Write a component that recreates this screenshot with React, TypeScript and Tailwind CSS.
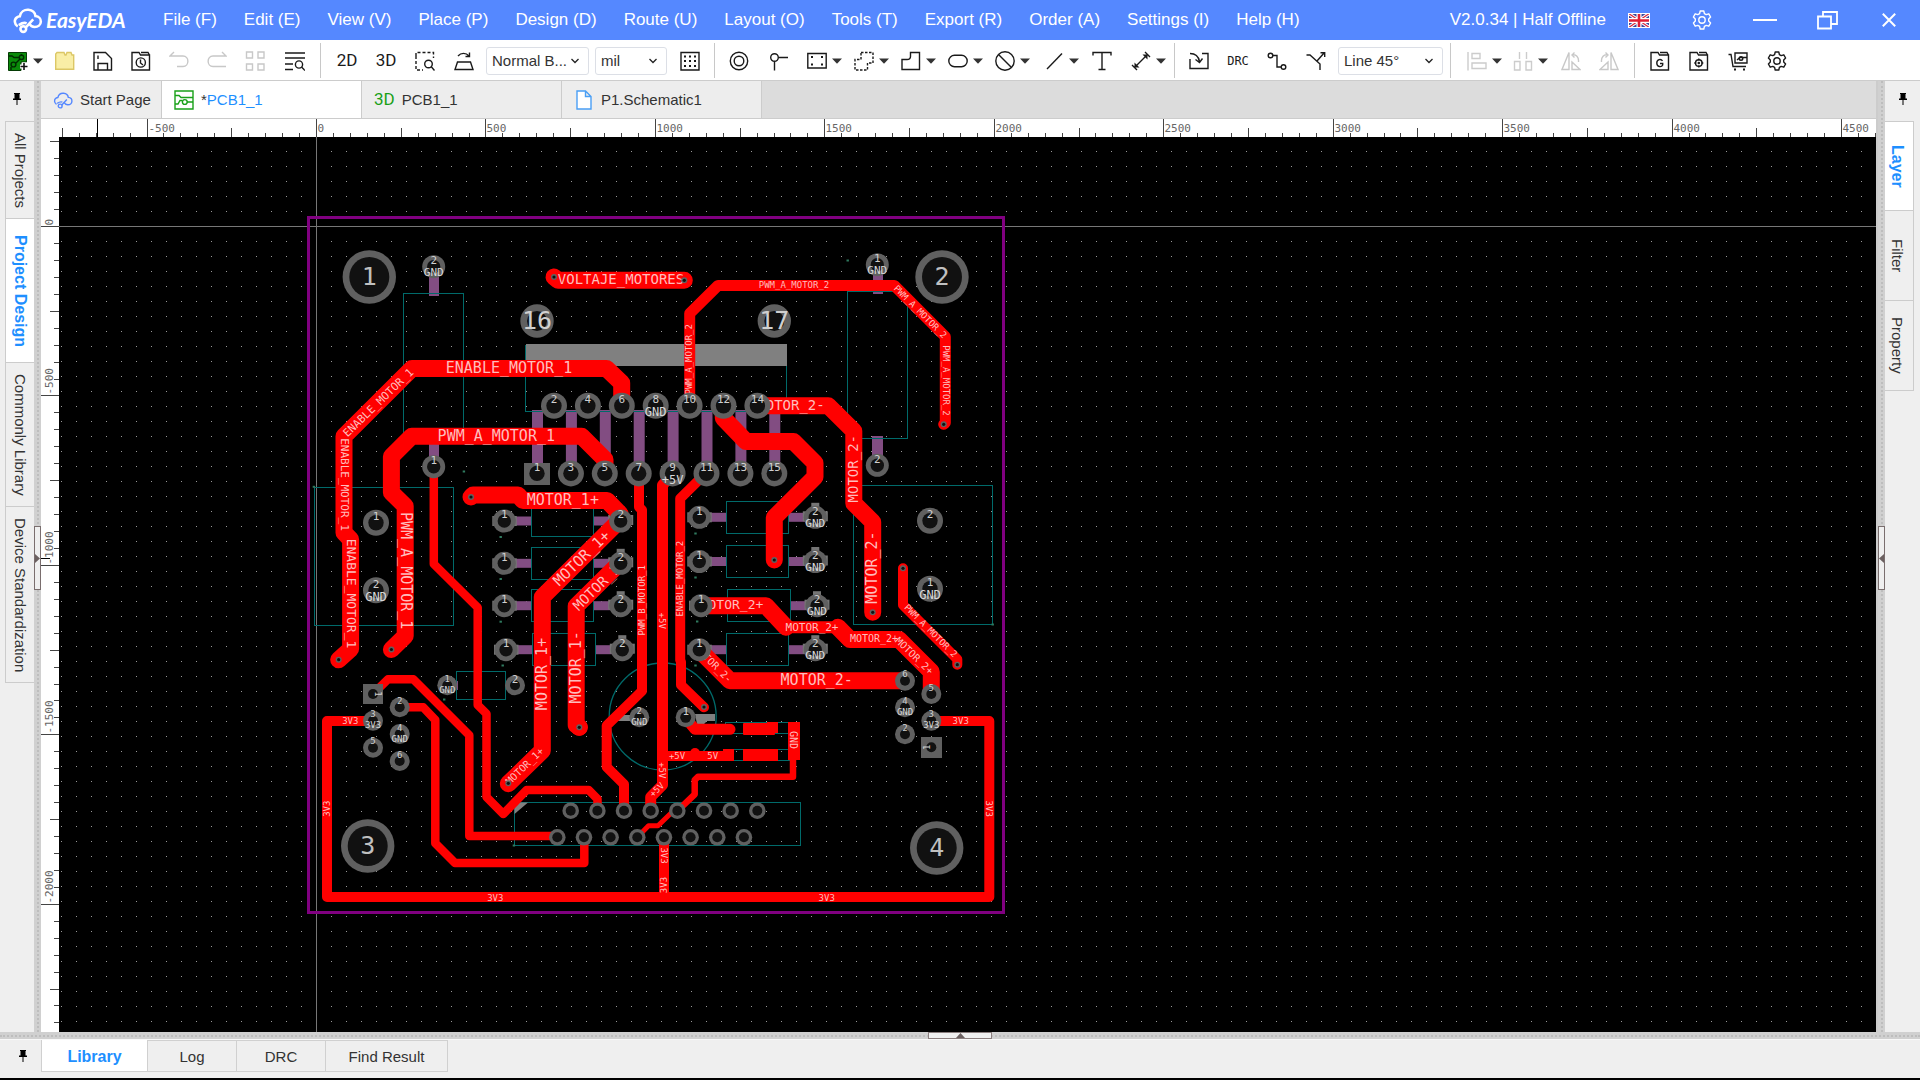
import { useEffect, useState, type ReactNode } from "react";

const menus = [
  "File (F)",
  "Edit (E)",
  "View (V)",
  "Place (P)",
  "Design (D)",
  "Route (U)",
  "Layout (O)",
  "Tools (T)",
  "Export (R)",
  "Order (A)",
  "Settings (I)",
  "Help (H)",
];

/* ---------- small shared pieces ---------- */

function Icon({ children, className = "" }: { children: ReactNode; className?: string }) {
  return (
    <svg
      viewBox="0 0 20 20"
      className={`h-5 w-5 shrink-0 ${className}`}
      fill="none"
      stroke="currentColor"
      strokeWidth={1.4}
      aria-hidden="true"
    >
      {children}
    </svg>
  );
}

function Tool({ label, children, className = "" }: { label: string; children: ReactNode; className?: string }) {
  return (
    <button
      type="button"
      aria-label={label}
      className={`flex h-5 w-5 shrink-0 items-center justify-center text-[#1a1a1a] ${className}`}
    >
      {children}
    </button>
  );
}

function DropTool({ label, children, className = "" }: { label: string; children: ReactNode; className?: string }) {
  return (
    <button
      type="button"
      aria-label={label}
      className={`flex shrink-0 items-center gap-[5px] text-[#1a1a1a] ${className}`}
    >
      {children}
      <svg viewBox="0 0 10 6" className="h-[6px] w-[10px]" fill="#333" aria-hidden="true">
        <path d="M0 0.5H10L5 5.8Z" />
      </svg>
    </button>
  );
}

function Separator({ className = "" }: { className?: string }) {
  return <div className={`h-[35px] w-px shrink-0 bg-[#c8c8c8] ${className}`} />;
}

function Picker({ label, value, className = "" }: { label: string; value: string; className?: string }) {
  return (
    <div className={`relative h-7 shrink-0 ${className}`}>
      <select
        aria-label={label}
        className="h-7 w-full appearance-none rounded-[3px] border border-[#dcdfe6] bg-white pl-[5px] text-[15px] leading-6 text-[#333]"
      >
        <option>{value}</option>
      </select>
      <svg
        viewBox="0 0 8 6"
        className="pointer-events-none absolute top-[11px] right-[10px] h-[6px] w-[8px]"
        fill="none"
        stroke="#222"
        strokeWidth={1.3}
        aria-hidden="true"
      >
        <path d="M0.5 1L4 4.5L7.5 1" />
      </svg>
    </div>
  );
}

function Pin() {
  return (
    <svg viewBox="0 0 8 12" className="h-3 w-2" aria-hidden="true">
      <path d="M1 0H7V1H6.5V5.5H8V7H4.5V12H3.5V7H0V5.5H1.5V1H1Z" fill="#000" />
    </svg>
  );
}

function Cloud() {
  return (
    <>
      <path d="M3.5 14.3C1.2 12.8 0.8 9.6 3 8.2C3.6 7.8 4.2 7.6 4.9 7.5C5.5 4.6 7.9 3 10.6 3.2C13.2 3.4 15 5.2 15.3 7.4C17.7 7.6 19 9.3 18.9 11.2C18.8 13.3 17 14.7 14.8 14.7C12.8 14.7 11.7 13.5 11 12.3" />
      <path d="M8.6 15.2L13.8 9.6" />
      <circle cx="7.2" cy="16" r="1.9" />
      <path d="M4.2 13.4C5.8 12.3 7.5 11.3 9.4 12.2" />
    </>
  );
}

function Gear() {
  return (
    <>
      <path
        d="M8.2 1H11.8L12.4 3.6L14.2 4.6L16.8 3.8L18.6 7L16.7 8.9V11.1L18.6 13L16.8 16.2L14.2 15.4L12.4 16.4L11.8 19H8.2L7.6 16.4L5.8 15.4L3.2 16.2L1.4 13L3.3 11.1V8.9L1.4 7L3.2 3.8L5.8 4.6L7.6 3.6Z"
        strokeLinejoin="round"
      />
      <circle cx="10" cy="10" r="3.2" />
    </>
  );
}

/* ---------- title bar ---------- */

function TitleBar() {
  return (
    <header className="flex h-10 shrink-0 items-center bg-[#5588ff] text-[17px] text-white">
      <div className="flex w-[163px] shrink-0 items-center pl-3">
        <svg viewBox="0 0 20 20" className="h-[30px] w-[31px]" fill="none" stroke="#fff" strokeWidth={1.7} aria-hidden="true">
          <Cloud />
        </svg>
        <span className="pl-[3px] font-['Lato','Open_Sans',sans-serif] text-[21px] leading-6 font-bold italic">
          EasyEDA
        </span>
      </div>
      <nav className="flex gap-[27px] pb-px whitespace-nowrap">
        {menus.map((menu) => (
          <button key={menu} type="button">
            {menu}
          </button>
        ))}
      </nav>
      <div className="ml-auto flex shrink-0 items-center pr-6 whitespace-nowrap">
        <span>V2.0.34 | Half Offline</span>
        <button type="button" aria-label="Language" className="ml-[22px]">
          <svg viewBox="0 0 22 15" className="h-[15px] w-[22px]" aria-hidden="true">
            <rect width="22" height="15" fill="#3b4a9c" />
            <path d="M0 0L22 15M22 0L0 15" stroke="#fff" strokeWidth="3.2" />
            <path d="M0 0L22 15M22 0L0 15" stroke="#d8283c" strokeWidth="1.2" />
            <path d="M11 0V15M0 7.5H22" stroke="#fff" strokeWidth="5" />
            <path d="M11 0V15M0 7.5H22" stroke="#e01f35" strokeWidth="2.6" />
            <rect x="0.5" y="0.5" width="21" height="14" fill="none" stroke="#fff" />
          </svg>
        </button>
        <button type="button" aria-label="Preferences" className="ml-[42px]">
          <Icon>
            <Gear />
          </Icon>
        </button>
        <button type="button" aria-label="Minimize" className="ml-[41px]">
          <svg viewBox="0 0 24 20" className="h-5 w-6" stroke="#fff" strokeWidth={2} aria-hidden="true">
            <path d="M0 10H24" />
          </svg>
        </button>
        <button type="button" aria-label="Restore" className="ml-10">
          <svg viewBox="0 0 21 20" className="h-5 w-[21px]" fill="none" stroke="#fff" strokeWidth={1.8} aria-hidden="true">
            <path d="M1 6.5H14V18.5H1Z M6 6V2H20V14H14.5" />
          </svg>
        </button>
        <button type="button" aria-label="Close" className="ml-11">
          <svg viewBox="0 0 14 14" className="h-[14px] w-[14px]" stroke="#fff" strokeWidth={2} aria-hidden="true">
            <path d="M0.8 0.8L13.2 13.2M13.2 0.8L0.8 13.2" />
          </svg>
        </button>
      </div>
    </header>
  );
}

/* ---------- tool bar ---------- */

function ToolBar() {
  return (
    <div className="flex h-[41px] shrink-0 items-center border-b border-[#ccc] bg-white pt-px pl-2">
      <DropTool label="New">
        <svg viewBox="0 0 20 20" className="h-5 w-5" fill="none" aria-hidden="true">
          <path d="M0.5 1.5H18.5V11H13V19.5H0.5Z" fill="#0a8a0a" stroke="#053b05" />
          <path d="M1 5H4L6 6.5H11M13.5 3V5M3 19V16M8 12L12 8" stroke="#012b01" strokeWidth="1.4" />
          <circle cx="13.5" cy="6.3" r="2.2" stroke="#012b01" strokeWidth="1.4" />
          <circle cx="5.5" cy="13.5" r="2.4" stroke="#012b01" strokeWidth="1.4" />
          <path d="M16 11.5V19.5M12 15.5H20" stroke="#fff" strokeWidth="4" />
          <path d="M16 12V19M12.5 15.5H19.5" stroke="#111" strokeWidth="1.6" />
        </svg>
      </DropTool>
      <div className="ml-[12px] flex gap-[18px]">
        <Tool label="Open">
          <Icon>
            <path d="M0.7 3V18.3H18.7V4H17L16 1.5H12L11 4H10L9 1.5H2Z" fill="#f9eea6" stroke="#dcc766" />
          </Icon>
        </Tool>
        <Tool label="Save">
          <Icon>
            <path d="M1 1.5H12.5L18.5 7.5V19H1Z M5 19V12.5H14.5V19M5 4.5V8" />
          </Icon>
        </Tool>
        <Tool label="History">
          <Icon>
            <path d="M1 19V1.5H8L9.5 4H18.5V19Z M10 1.5H17L18.5 4" />
            <circle cx="9.8" cy="11.5" r="4.6" />
            <path d="M9.5 8.5V12L12 14" />
          </Icon>
        </Tool>
        <Tool label="Undo" className="text-[#c8c8c8]!">
          <Icon>
            <path d="M5 1L1 5H14C20.5 5 20.5 15.5 14 15.5H8" />
          </Icon>
        </Tool>
        <Tool label="Redo" className="text-[#c8c8c8]!">
          <Icon>
            <path d="M15 1L19 5H6C-0.5 5 -0.5 15.5 6 15.5H19" />
          </Icon>
        </Tool>
        <Tool label="Arrange" className="text-[#c8c8c8]!">
          <Icon>
            <path d="M1.5 1H7.5V7H1.5ZM13 1H19V7H13ZM1.5 13H7.5V19H1.5ZM13 13H19V19H13Z" />
          </Icon>
        </Tool>
        <Tool label="Find" className="ml-[2px]">
          <Icon>
            <path d="M0 2H20M0 7H20M0 13H8M0 18.5H8" strokeWidth="1.7" />
            <circle cx="14" cy="13.5" r="3.6" />
            <path d="M16.5 16L20 19.5" />
          </Icon>
        </Tool>
      </div>
      <Separator className="ml-[15px]" />
      <div className="ml-4 flex gap-[19px]">
        <Tool label="2D view">
          <span className="font-['Roboto',sans-serif] text-[17px]">2D</span>
        </Tool>
        <Tool label="3D view">
          <span className="font-['Roboto',sans-serif] text-[17px]">3D</span>
        </Tool>
        <Tool label="Zoom area">
          <Icon>
            <path d="M1 5V1.5H18.5V7M1 5V19H8" strokeDasharray="3 2" />
            <circle cx="13.5" cy="13" r="3.8" />
            <path d="M16.3 15.8L19.5 19.5" />
          </Icon>
        </Tool>
        <Tool label="Flip board">
          <Icon>
            <path d="M3.5 11H16.5L19 18.5H1ZM4 5C7 1.5 12 1.5 15 5M15.5 1.5V5.5H11.5" />
          </Icon>
        </Tool>
      </div>
      <Picker label="View mode" value="Normal B..." className="ml-3 w-[103px]" />
      <Picker label="Unit" value="mil" className="ml-[6px] w-[72px]" />
      <Tool label="Grid" className="ml-[13px]">
        <Icon>
          <path d="M1 1.5H19V19H1Z" />
          <path
            d="M4 5.5H6M9 5.5H11M14 5.5H16M4 10H6M9 10H11M14 10H16M4 15H6M9 15H11M14 15H16"
            strokeWidth="2"
          />
        </Icon>
      </Tool>
      <Separator className="ml-[14px]" />
      <Tool label="Pad" className="ml-[14px]">
        <Icon>
          <circle cx="10" cy="10" r="8.7" />
          <circle cx="10" cy="10" r="4.8" />
        </Icon>
      </Tool>
      <Tool label="Via" className="ml-5">
        <Icon>
          <circle cx="5.5" cy="6.5" r="3.8" />
          <path d="M9.5 6.5H19M5.5 10.5V19.5" />
        </Icon>
      </Tool>
      <div className="ml-[18px] flex gap-3">
        <DropTool label="Copper area">
          <Icon>
            <path d="M0.8 2.5H19.2V17H0.8Z" />
            <path d="M4 6H6M14 6H16M4 13.5H6M14 13.5H16" strokeWidth="2" />
          </Icon>
        </DropTool>
        <DropTool label="Keepout region">
          <Icon>
            <path d="M7 1.5H19V12H13.5V19H1V8.5H7Z" strokeDasharray="2.5 1.5" />
          </Icon>
        </DropTool>
        <DropTool label="Fill region">
          <Icon>
            <path d="M9.5 1.5H18.5V18.5H1V8.5H6C8 8.5 9.5 7.5 9.5 5.5Z" />
          </Icon>
        </DropTool>
        <DropTool label="Board outline">
          <Icon>
            <rect x="0.8" y="4.3" width="18.4" height="11.4" rx="5.7" />
          </Icon>
        </DropTool>
        <DropTool label="Slot">
          <Icon>
            <circle cx="10" cy="10" r="9.2" />
            <path d="M3.5 3.5L16.5 16.5" />
          </Icon>
        </DropTool>
        <DropTool label="Line" className="ml-[2px]">
          <Icon>
            <path d="M3 18L18 2.5" />
          </Icon>
        </DropTool>
      </div>
      <Tool label="Text" className="ml-[13px]">
        <Icon>
          <path d="M1 4.5V1.5H19V4.5M10 1.5V18.5M6.5 18.5H13.5" />
        </Icon>
      </Tool>
      <DropTool label="Dimension" className="ml-[19px]">
        <Icon>
          <path d="M3.5 16.5L16.5 3.5M1 14L6 19M14 1L19 6" />
          <path d="M3.5 16.5V11.5L8.5 16.5ZM16.5 3.5H11.5L16.5 8.5Z" fill="currentColor" stroke="none" />
        </Icon>
      </DropTool>
      <Separator className="ml-[8px]" />
      <div className="ml-[14px] flex gap-[19px]">
        <Tool label="Import changes">
          <Icon>
            <path d="M1 8V17.5H19V2.5H13M1 2.5C6 2.5 9.5 5 10.5 10.5M6.5 8.5L10.5 11.5L13.5 7.5" />
          </Icon>
        </Tool>
        <Tool label="Check design rules">
          <span className="font-['DejaVu_Sans_Mono',monospace] text-[12px]">DRC</span>
        </Tool>
        <Tool label="Route track">
          <Icon>
            <circle cx="3.5" cy="4.5" r="2.3" />
            <circle cx="16.5" cy="16" r="2.3" />
            <path d="M6 4.5H10V16H14" />
          </Icon>
        </Tool>
        <Tool label="Route options">
          <Icon>
            <path d="M0.5 4H4L14 13V19M11 10L18.5 1.5M14.5 1.8H18.7V6" />
          </Icon>
        </Tool>
      </div>
      <Picker label="Routing angle" value="Line 45°" className="ml-3 w-[105px]" />
      <Separator className="ml-[7px]" />
      <DropTool label="Align" className="ml-4">
        <Icon className="text-[#ccc]">
          <path d="M1 1V19.5M5 2.5H13V7.5H5ZM5 12H19V17.5H5Z" />
        </Icon>
      </DropTool>
      <DropTool label="Distribute" className="ml-[11px]">
        <Icon className="text-[#ccc]">
          <path d="M6.5 1V8M13.5 1V8M1.5 10.5H7V19H1.5ZM13 10.5H18.5V19H13Z" />
        </Icon>
      </DropTool>
      <Tool label="Rotate left" className="ml-[13px] text-[#c8c8c8]!">
        <Icon>
          <path d="M8 1.5V18.5H1Z M11 11L19 18.5H11ZM11 4C15 3 18 6 17.5 11M13.5 1.5L11 4L13.5 6.5" />
        </Icon>
      </Tool>
      <Tool label="Rotate right" className="ml-[18px] text-[#c8c8c8]!">
        <Icon>
          <path d="M12 1.5V18.5H19Z M9 11L1 18.5H9ZM9 4C5 3 2 6 2.5 11M6.5 1.5L9 4L6.5 6.5" />
        </Icon>
      </Tool>
      <Separator className="ml-[15px]" />
      <div className="ml-[15px] flex gap-[19px]">
        <Tool label="Gerber file">
          <Icon>
            <path d="M1 19V1.5H8L9.5 4H18.5V19Z M10 1.5H17L18.5 4" />
            <path d="M12.5 10C11 7.5 6.8 8.2 6.8 12C6.8 16.2 11.5 16.5 12.7 14V12.5H10" />
          </Icon>
        </Tool>
        <Tool label="Pick and place file">
          <Icon>
            <path d="M1 19V1.5H8L9.5 4H18.5V19Z M10 1.5H17L18.5 4" />
            <circle cx="9.8" cy="12" r="3.3" />
            <path d="M9.8 7.5V9.5M9.8 14.5V16.5M5.3 12H7.3M12.3 12H14.3" />
            <circle cx="9.8" cy="12" r="0.6" />
          </Icon>
        </Tool>
        <Tool label="Order parts">
          <Icon>
            <path d="M0.5 3.5H3L5 15.5H18M7 2H19V12H7Z M9 9L12 6.5H19" />
            <circle cx="13" cy="7.5" r="1.8" />
            <path d="M6 18.5H8M15 18.5H17" strokeWidth="2" />
          </Icon>
        </Tool>
        <Tool label="Settings">
          <Icon>
            <Gear />
          </Icon>
        </Tool>
      </div>
    </div>
  );
}

/* ---------- document tabs ---------- */

function DocTabs() {
  const tab = "flex items-center gap-[7px] border-r border-[#ccc] pt-px pl-3 whitespace-nowrap";
  return (
    <div className="flex h-[38px] shrink-0 border-b border-[#ccc] bg-[#dcdcdc] text-[15px] text-[#333]">
      <button type="button" className={`${tab} w-[121px] bg-[#ededed]`}>
        <Icon className="text-[#5588ff]">
          <Cloud />
        </Icon>
        Start Page
      </button>
      <button type="button" className={`${tab} w-[200px] bg-white`}>
        <Icon className="text-[#18a018]">
          <path d="M1 1H19V19H1ZM1 5.5H5L7 7.5H19M1 14H4L6 10.5H8M13 12H19" />
          <circle cx="10.8" cy="12" r="2.4" />
        </Icon>
        <span>
          *<span className="text-[#1e8fff]">PCB1_1</span>
        </span>
      </button>
      <button type="button" className={`${tab} w-[200px] bg-[#ededed]`}>
        <span className="font-['Roboto',sans-serif] text-[17px] text-[#18a018]">3D</span>
        PCB1_1
      </button>
      <button type="button" className={`${tab} w-[200px] bg-[#ededed]`}>
        <Icon className="text-[#4a9ff5]">
          <path d="M3 1H11.5L17 6.5V19H3ZM11.5 1V6.5H17" fill="#fff" />
        </Icon>
        P1.Schematic1
      </button>
    </div>
  );
}

/* ---------- rulers, one tick each 50 mil ---------- */

const TICK = 16.945;

function useTicks() {
  const [size, setSize] = useState({ w: window.innerWidth, h: window.innerHeight });
  useEffect(() => {
    const onResize = () => setSize({ w: window.innerWidth, h: window.innerHeight });
    window.addEventListener("resize", onResize);
    return () => window.removeEventListener("resize", onResize);
  }, []);
  const range = (from: number, to: number) => Array.from({ length: Math.max(0, to - from) }, (_, i) => i + from);
  return {
    across: range(-15, Math.floor((size.w - 44 - 316) / TICK) + 1),
    down: range(-5, Math.floor((size.h - 48 - 226) / TICK) + 1),
  };
}

function TopRuler() {
  const { across } = useTicks();
  return (
    <svg className="block h-[18px] w-full bg-white" aria-hidden="true">
      <g transform="translate(-41 -119)">
        {across.map((k) => {
          const x = Math.floor(316.5 + k * TICK) + 0.5;
          const len = k % 10 === 0 ? 18 : k % 5 === 0 ? 9 : 4;
          return (
            <g key={k}>
              <path d={`M${x} ${137 - len}V137`} stroke="#444" />
              {k % 10 === 0 && (
                <text x={x + 1} y="132" fontSize="11" fill="#666">
                  {k * 50}
                </text>
              )}
            </g>
          );
        })}
        <path d="M97.5 119V137" stroke="#000" />
      </g>
    </svg>
  );
}

function SideRuler() {
  const { down } = useTicks();
  return (
    <svg className="block h-full w-[18px] shrink-0 bg-white" aria-hidden="true">
      <g transform="translate(-41 -137)">
        {down.map((k) => {
          const y = Math.floor(226.5 + k * TICK) + 0.5;
          const len = k % 10 === 0 ? 18 : k % 5 === 0 ? 9 : 5;
          return (
            <g key={k}>
              <path d={`M${59 - len} ${y}H59`} stroke="#444" />
              {k % 10 === 0 && (
                <text transform={`translate(53 ${y - 1}) rotate(-90)`} fontSize="11" fill="#666">
                  {-k * 50}
                </text>
              )}
            </g>
          );
        })}
        <path d="M41 558.5H50" stroke="#000" />
      </g>
    </svg>
  );
}

/* ---------- board data ---------- */

// [width, path]
const tracks: [number, string][] = [
  [17, "M554 277L558 280.3H684.3"],
  [17, "M621.7 405V383L606.5 368.5H412L344 436.3V532.7L350.6 539.5V649L338.7 659.7"],
  [17, "M605 473V459.5L581.7 436.3H411.7L391.4 456.5V492.5L405.2 506V636L391.4 649.5"],
  [8.5, "M433.8 467V564L477.7 607.5V705L486.5 713.7V797L503.3 814L526.7 790H588.7L597.5 799V811"],
  [17, "M471 497L473 495H518L523 500.5H607L620 514"],
  [17, "M618.3 521.7L542.3 597V750.7L508.3 783.7"],
  [17, "M616.7 566L576.2 606V725L579.3 727.3"],
  [10, "M639 475V507L642 510V691L606.7 725.5V767L624 784.3V811"],
  [11, "M672 475L662.5 485V785L650.7 797V811"],
  [10, "M706 473L680.2 498.5V660L681 662V685L704 707.3"],
  [17, "M723.3 406V418L746 441.5H793.5L815 463V477L774.3 517.5V560"],
  [17, "M757 405.7H828.3L853.8 431V503.3L872.7 522V612.3"],
  [11, "M689.7 405V313.5L718 285.5H894.3L945.3 336.7V423L943.7 424.3"],
  [17, "M701 605.7H766L786 627.3"],
  [12, "M784 627.3H839"],
  [17, "M838 627.3L850 639.5H899L931.3 671.7V694"],
  [17, "M699 649.7L730 680.7H905"],
  [10, "M903 568.3V605L957.3 659.3V664.7"],
  [10, "M931.3 721H989.3V897H327V721H373"],
  [10, "M664 837V897"],
  [8.5, "M373 694L388 679.3H413.3L469.3 735.3V836H557"],
  [8.5, "M399.7 707.3H423.3L435.3 720V843.3L455 863H584.3V837"],
  [5, "M637.3 837.3L648.5 825.8H658L677.3 807"],
  [6.5, "M677.3 811L694.7 794.3V780L698 776.7H793V745"],
  [11, "M685.7 718L695 729.3H730"],
  [10, "M664 756H728"],
];

// [text, centre x, centre y, size, angle]
const nets: [string, number, number, number, number][] = [
  ["VOLTAJE_MOTORES", 621, 279.7, 14, 0],
  ["ENABLE_MOTOR_1", 509, 368.3, 15, 0],
  ["ENABLE_MOTOR_1", 378.5, 403, 11, -44],
  ["ENABLE_MOTOR_1", 344.5, 484.5, 11, 90],
  ["ENABLE_MOTOR_1", 350.7, 593.5, 13, 90],
  ["PWM_A_MOTOR_1", 496.3, 436, 15, 0],
  ["PWM_A_MOTOR_1", 405, 570.7, 15, 90],
  ["MOTOR_1+", 562.8, 500, 15, 0],
  ["MOTOR_1+", 582, 558.5, 15, -44],
  ["MOTOR_1+", 542, 674, 15, -90],
  ["MOTOR_1+", 525, 766.5, 10, -44],
  ["MOTOR_1-", 600, 585, 14, -44],
  ["MOTOR_1-", 576, 667.3, 15, -90],
  ["PWM_B_MOTOR_1", 642.3, 600.3, 9, -90],
  ["+5V", 662.7, 620.7, 9, 90],
  ["+5V", 662.7, 770.3, 9, 90],
  ["+5V", 656.7, 789.5, 9, -45],
  ["ENABLE_MOTOR_2", 680.2, 578.7, 9, -90],
  ["MOTOR_2-", 791, 405.3, 14, 0],
  ["MOTOR_2-", 854, 468.7, 14, -90],
  ["MOTOR_2-", 872.7, 567.5, 15, -90],
  ["PWM_A_MOTOR_2", 794, 285.2, 9, 0],
  ["PWM_A_MOTOR_2", 689.7, 359.3, 9, -90],
  ["PWM_A_MOTOR_2", 920, 312, 9, 45],
  ["PWM_A_MOTOR_2", 945.3, 380.5, 9, 90],
  ["MOTOR_2+", 732, 605.3, 13, 0],
  ["MOTOR_2+", 812, 627.3, 11, 0],
  ["MOTOR_2+", 874, 639, 10, 0],
  ["MOTOR_2+", 914, 656, 10, 44],
  ["MOTOR_2-", 816.7, 680.3, 15, 0],
  ["MOTOR_2-", 713, 664, 10, 45],
  ["PWM_A_MOTOR_2", 930.5, 631, 9, 45],
  ["3V3", 350.3, 720.7, 9, 0],
  ["3V3", 960.7, 720.7, 9, 0],
  ["3V3", 327, 808.7, 9, -90],
  ["3V3", 989.7, 808.7, 9, 90],
  ["3V3", 495.3, 897.3, 9, 0],
  ["3V3", 826.7, 897.3, 9, 0],
  ["3V3", 664.3, 855.5, 9, 90],
  ["3V3", 664, 885, 9, -90],
  ["+5V", 677, 756, 9, 0],
  ["5V", 712.7, 756, 9, 0],
  ["GND", 793.7, 740, 10, 90],
];

type Pad = { x: number; y: number; r: number; hole: number; n?: string; net?: string; size?: number };

const icTop: Pad[] = [2, 4, 6, 8, 10, 12, 14].map((n, i) => ({
  x: 554 + i * 33.9,
  y: 405.7,
  r: 13,
  hole: 7.7,
  n: String(n),
  net: n === 8 ? "GND" : undefined,
  size: 12,
}));
const icBottom: Pad[] = [3, 5, 7, 9, 11, 13, 15].map((n, i) => ({
  x: 570.9 + i * 33.9,
  y: 473.4,
  r: 13,
  hole: 7.7,
  n: String(n),
  net: n === 9 ? "+5V" : undefined,
  size: 12,
}));

const pads: Pad[] = [
  ...icTop,
  ...icBottom,
  { x: 433.7, y: 266.7, r: 11.5, hole: 6.7, n: "2", net: "GND" },
  { x: 433.7, y: 466.7, r: 11.5, hole: 6.7, n: "1" },
  { x: 877.3, y: 264.7, r: 11.5, hole: 6.7, n: "1", net: "GND" },
  { x: 877.3, y: 465.3, r: 11.5, hole: 6.7, n: "2" },
  { x: 376, y: 522.7, r: 13, hole: 7.7, n: "1" },
  { x: 376, y: 590.3, r: 13, hole: 7.7, n: "2", net: "GND", size: 12 },
  { x: 930, y: 520.7, r: 13, hole: 7.7, n: "2" },
  { x: 930, y: 588.7, r: 13, hole: 7.7, n: "1", net: "GND", size: 12 },
  { x: 447.3, y: 685.3, r: 10, hole: 5, n: "1", net: "GND", size: 9 },
  { x: 515, y: 685.3, r: 10, hole: 5, n: "2" },
  { x: 639.3, y: 717.3, r: 10, hole: 5, n: "2", net: "GND", size: 9 },
  { x: 685.7, y: 717.3, r: 10, hole: 5.5, n: "1" },
  { x: 905, y: 680.7, r: 10, hole: 5, n: "6", size: 9 },
  { x: 931.3, y: 694, r: 10, hole: 5, n: "5", size: 9 },
  { x: 905, y: 707.3, r: 10, hole: 5, n: "4", net: "GND", size: 9 },
  { x: 931.3, y: 720.7, r: 10, hole: 5, n: "3", net: "3V3", size: 9 },
  { x: 905, y: 734.3, r: 10, hole: 5, n: "2", size: 9 },
  { x: 399.7, y: 707.3, r: 10, hole: 5, n: "2", size: 9 },
  { x: 373, y: 720.7, r: 10, hole: 5, n: "3", net: "3V3", size: 9 },
  { x: 399.7, y: 734, r: 10, hole: 5, n: "4", net: "GND", size: 9 },
  { x: 373, y: 747.7, r: 10, hole: 5, n: "5", size: 9 },
  { x: 399.7, y: 761, r: 10, hole: 5, n: "6", size: 9 },
  ...Array.from({ length: 8 }, (_, i) => ({ x: 570.7 + i * 26.66, y: 810.7, r: 8.3, hole: 5 })),
  ...Array.from({ length: 8 }, (_, i) => ({ x: 557.3 + i * 26.66, y: 837.3, r: 8.3, hole: 5 })),
];

// two-lead parts: left pad, right pad, row centre, body left/right/top
const parts: { l: number; r: number; y: number; x1: number; x2: number; top: number; net?: string }[] = [
  { l: 504.3, r: 620.7, y: 521, x1: 531.5, x2: 593.5, top: 504.5 },
  { l: 504.3, r: 620.7, y: 563.3, x1: 531.5, x2: 593.5, top: 547.5 },
  { l: 504.3, r: 620.7, y: 605.7, x1: 531.5, x2: 593.5, top: 589.5 },
  { l: 506, r: 622.3, y: 649.7, x1: 532.5, x2: 595.5, top: 633.5 },
  { l: 699.3, r: 815.3, y: 517.3, x1: 726.5, x2: 788.5, top: 501.5, net: "GND" },
  { l: 699.3, r: 815.3, y: 561.5, x1: 726.5, x2: 788.5, top: 545.5, net: "GND" },
  { l: 701, r: 817, y: 605.7, x1: 727.5, x2: 790.5, top: 589.5, net: "GND" },
  { l: 699.3, r: 815.3, y: 649.7, x1: 726.5, x2: 788.5, top: 633.5, net: "GND" },
];

const partPads: Pad[] = parts.flatMap((p) => [
  { x: p.l, y: p.y, r: 11.5, hole: 6.7, n: "1" },
  { x: p.r, y: p.y, r: 11.5, hole: 6.7, n: "2", net: p.net },
]);

const bodies = [
  [403.5, 293.5, 60, 146],
  [525.5, 345.5, 261, 66],
  [847.5, 291.5, 60, 147],
  [314.5, 487.5, 139, 138],
  [853.5, 485.5, 139, 139],
  [456.5, 671.5, 49, 28],
  [514.5, 802.5, 286, 43],
  [725.5, 722.5, 64, 11],
  [725.5, 749.5, 64, 11],
];

const vias = [
  [554, 277],
  [684.3, 280.3],
  [338.7, 659.7],
  [391.4, 649.5],
  [471, 497],
  [508.3, 783.3],
  [579.3, 727.3],
  [704, 707],
  [774.3, 560],
  [872.7, 612.3],
  [943.7, 424.3],
  [903, 568.3],
  [957.3, 664.7],
];

const marks = [
  [847.5, 260.5],
  [463.7, 471.5],
  [313.7, 486.8],
  [500.5, 537],
  [500.5, 579],
  [500.5, 621.7],
  [502.5, 665.5],
  [444, 699.5],
  [695.3, 533.5],
  [695.3, 577.5],
  [697, 621.5],
  [695.3, 665.5],
  [992.5, 624.5],
  [513.7, 845.5],
];

function Label({ text, x, y, size, angle = 0, fill }: { text: string; x: number; y: number; size: number; angle?: number; fill: string }) {
  // net names hang an underscore below the baseline, so they sit a little higher
  const drop = text.includes("_") ? 0.3 : 0.365;
  return (
    <text
      transform={`translate(${x} ${y}) rotate(${angle})`}
      y={size * drop}
      fontSize={size}
      fill={fill}
      textAnchor="middle"
    >
      {text}
    </text>
  );
}

function PadShape({ pad }: { pad: Pad }) {
  const size = pad.size ?? 11;
  return (
    <g>
      <circle cx={pad.x} cy={pad.y} r={pad.r} fill="#606060" />
      <circle cx={pad.x} cy={pad.y} r={pad.hole} fill="#111" />
      {pad.n && <Label text={pad.n} x={pad.x} y={pad.y - 6.7} size={Math.min(size, 11)} fill="#d0d0d0" />}
      {pad.net && <Label text={pad.net} x={pad.x} y={pad.y + (size > 11 ? 6.3 : size < 11 ? 4.3 : 5.5)} size={size} fill="#d8d8d8" />}
    </g>
  );
}

function Board() {
  return (
    <svg className="block h-full w-full bg-black font-['DejaVu_Sans_Mono',monospace]" role="img" aria-label="PCB1_1 board layout">
      <defs>
        <pattern id="dots" width="15" height="15" patternUnits="userSpaceOnUse">
          <rect x="1" y="1" width="1" height="1" fill="#999" />
        </pattern>
      </defs>
      <g transform="translate(-59 -137)">
        <rect x="59" y="137" width="6000" height="4000" fill="url(#dots)" />
        <path d="M316.5 137V4000M59 226.5H6000" stroke="#777" />
        <rect x="308.5" y="217.5" width="695" height="695" fill="none" stroke="#800080" strokeWidth="3" />

        {/* component bodies and leads */}
        <g fill="#824d82">
          {Array.from({ length: 8 }, (_, i) => (
            <rect key={i} x={532 + i * 33.9} y="410" width="11" height="54" />
          ))}
          <rect x="429" y="276" width="10" height="20" />
          <rect x="429" y="440" width="10" height="20" />
          <rect x="873" y="270" width="10" height="24" />
          <rect x="872" y="436" width="11" height="20" />
          <rect x="454" y="681" width="4" height="9" />
          {parts.map((p) => (
            <g key={`${p.l}-${p.y}`}>
              <rect x={p.l} y={p.y - 4.5} width={p.x1 - p.l} height="9" />
              <rect x={p.x2} y={p.y - 4.5} width={p.r - p.x2} height="9" />
            </g>
          ))}
        </g>
        <g fill="#757575">
          {parts.map((p) => (
            <g key={`${p.l}-${p.y}`}>
              <rect x={p.l - 12} y={p.y - 5} width="24.5" height="10" />
              <rect x={p.r - 12.5} y={p.y - 6} width="25" height="10" />
              <rect x={p.r - 4} y={p.y - 14.5} width="8" height="8" />
            </g>
          ))}
        </g>
        <g fill="none" stroke="#006a6a">
          {bodies.map(([x, y, w, h]) => (
            <rect key={`${x}-${y}`} x={x} y={y} width={w} height={h} />
          ))}
          {parts.map((p) => (
            <rect key={`${p.x1}-${p.y}`} x={p.x1} y={p.top} width={p.x2 - p.x1} height="32" />
          ))}
          <circle cx="662.7" cy="716.5" r="53.5" strokeWidth="1.3" />
        </g>
        <g fill="#808080">
          <rect x="526" y="344" width="261" height="22" />
          <path d="M514.5 802.5H528L514.5 814Z" />
          <rect x="616" y="715" width="14" height="6" />
          <path d="M695 714H715V721H707L704 724H697Z" />
        </g>
        <g fill="#2f7a5f">
          {marks.map(([x, y]) => (
            <rect key={`${x}-${y}`} x={x - 1} y={y - 1} width="2.4" height="2" />
          ))}
        </g>

        {/* top copper */}
        <g fill="none" stroke="#f00" strokeLinejoin="round" strokeLinecap="round">
          {tracks.map(([width, d]) => (
            <path key={d} d={d} strokeWidth={width} />
          ))}
        </g>
        <g fill="#f00">
          <circle cx="695" cy="753" r="5" />
          <circle cx="579.3" cy="727.3" r="8.5" />
          <rect x="723" y="749" width="11" height="12" />
          <rect x="743" y="749" width="35" height="12" />
          <rect x="743" y="723" width="32" height="12" rx="1" />
          <rect x="767" y="722" width="11" height="11" />
          <rect x="788" y="722" width="12" height="38" />
        </g>
        {nets.map(([text, x, y, size, angle]) => (
          <Label key={`${x}-${y}`} text={text} x={x} y={y} size={size} angle={angle} fill="#ffbcbc" />
        ))}
        {vias.map(([x, y]) => (
          <g key={`${x}-${y}`}>
            <circle cx={x} cy={y} r="3" fill="#606060" />
            <circle cx={x} cy={y} r="1.6" fill="#111" />
          </g>
        ))}

        {/* square first pins */}
        <rect x="524" y="463" width="26" height="22" fill="#606060" />
        <circle cx="537" cy="473.4" r="7.7" fill="#111" />
        <Label text="1" x={537} y={467} size={11} fill="#d0d0d0" />
        <rect x="363" y="684" width="20" height="20" fill="#606060" />
        <circle cx="373" cy="694" r="5" fill="#111" />
        <Label text="1" x={378} y={694} size={9} angle={90} fill="#d0d0d0" />
        <rect x="921" y="737" width="21" height="21" fill="#606060" />
        <circle cx="931.3" cy="747.3" r="5" fill="#111" />
        <Label text="1" x={926.5} y={747.3} size={9} angle={-90} fill="#d0d0d0" />

        {[...partPads, ...pads].map((pad) => (
          <PadShape key={`${pad.x}-${pad.y}`} pad={pad} />
        ))}

        {/* mounting holes */}
        {[
          { n: "1", x: 369.3, y: 277 },
          { n: "2", x: 942, y: 277 },
          { n: "3", x: 367.7, y: 846 },
          { n: "4", x: 936.7, y: 848 },
        ].map((hole) => (
          <g key={hole.n}>
            <circle cx={hole.x} cy={hole.y} r="26.7" fill="#606060" />
            <circle cx={hole.x} cy={hole.y} r="20" fill="#111" />
            <Label text={hole.n} x={hole.x} y={hole.y - 1.5} size={25} fill="#c0c0c0" />
          </g>
        ))}
        {[
          { n: "16", x: 537 },
          { n: "17", x: 774.3 },
        ].map((hole) => (
          <g key={hole.n}>
            <circle cx={hole.x} cy="321" r="16.7" fill="#606060" />
            <circle cx={hole.x} cy="321" r="10" fill="#111" />
            <Label text={hole.n} x={hole.x} y={320} size={25} fill="#d0d0d0" />
          </g>
        ))}
      </g>
    </svg>
  );
}

/* ---------- side panels ---------- */

function Splitter({ side }: { side: "left" | "right" }) {
  return (
    <div className="relative w-[7px] shrink-0 bg-[#d0d0d0]">
      <div className="mx-auto h-full w-0 border-l-2 border-dotted border-[#bdbdbd]" />
      <button
        type="button"
        aria-label={`Toggle ${side} panel`}
        className="absolute top-[445px] left-0 flex h-16 w-[7px] items-center justify-center border border-[#7a6e6e] bg-[#efefef]"
      >
        <svg viewBox="0 0 5 9" className="h-[9px] w-[5px] shrink-0" fill="#6b6060" aria-hidden="true">
          <path d={side === "left" ? "M0 0L5 4.5L0 9Z" : "M5 0L0 4.5L5 9Z"} />
        </svg>
      </button>
    </div>
  );
}

function LeftPanel() {
  const tab = "border-b border-l border-[#ccc] pt-[11px] pb-[10px] [writing-mode:vertical-rl]";
  return (
    <aside className="flex w-[34px] shrink-0 flex-col bg-[#efefef] pl-[5px] text-[15px] leading-7 text-[#333]">
      <button type="button" aria-label="Pin left panel" className="flex h-10 items-center justify-center pr-[6px] pb-[5px]">
        <Pin />
      </button>
      <button type="button" className={`${tab} border-t`}>
        All Projects
      </button>
      <button
        type="button"
        className="border-b border-l border-[#ccc] bg-white pt-4 pb-[15px] text-[16px] font-bold text-[#1e8fff] [writing-mode:vertical-rl]"
      >
        Project Design
      </button>
      <button type="button" className={tab}>
        Commonly Library
      </button>
      <button type="button" className={tab}>
        Device Standardization
      </button>
    </aside>
  );
}

function RightPanel() {
  const tab = "flex h-[90px] items-center justify-center border-r border-b border-[#ccc] pr-1 [writing-mode:vertical-rl]";
  return (
    <aside className="flex w-[35px] shrink-0 flex-col bg-[#efefef] pr-[6px] text-[15px] leading-6 text-[#333]">
      <button type="button" aria-label="Pin right panel" className="flex h-10 items-center justify-center pb-[5px] pl-[6px]">
        <Pin />
      </button>
      <button type="button" className={`${tab} border-t bg-white text-[16px] font-bold text-[#1e8fff]`}>
        Layer
      </button>
      <button type="button" className={tab}>
        Filter
      </button>
      <button type="button" className={tab}>
        Property
      </button>
    </aside>
  );
}

function BottomPanel() {
  const tab = "border-r border-b border-[#d0d0d0] pt-[2px]";
  return (
    <footer className="shrink-0 border-b-2 border-black bg-[#efefef]">
      <div className="relative h-[7px] bg-[#d0d0d0] pt-[3px]">
        <div className="border-t-2 border-dotted border-[#bdbdbd]" />
        <button
          type="button"
          aria-label="Toggle bottom panel"
          className="absolute top-0 left-1/2 flex h-[7px] w-16 -translate-x-1/2 items-center justify-center border border-[#8a7e7e] bg-[#efefef]"
        >
          <svg viewBox="0 0 9 5" className="h-[5px] w-[9px] shrink-0" fill="#6b6060" aria-hidden="true">
            <path d="M4.5 0L9 5H0Z" />
          </svg>
        </button>
      </div>
      <div className="flex h-[39px] border-t border-[#f8f8f8] pb-[6px] text-[15px] text-[#333]">
        <button type="button" aria-label="Pin bottom panel" className="flex w-[41px] items-center justify-center pl-[5px]">
          <Pin />
        </button>
        <button type="button" className={`${tab} w-[107px] border-l bg-white text-[16px] font-bold text-[#1e8fff]`}>
          Library
        </button>
        <button type="button" className={`${tab} w-[89px] border-t`}>
          Log
        </button>
        <button type="button" className={`${tab} w-[89px] border-t`}>
          DRC
        </button>
        <button type="button" className={`${tab} w-[122px] border-t`}>
          Find Result
        </button>
      </div>
    </footer>
  );
}

export default function App() {
  return (
    <div className="flex h-screen flex-col overflow-hidden bg-[#efefef] font-['Liberation_Sans',Arial,sans-serif]">
      <TitleBar />
      <ToolBar />
      <div className="flex min-h-0 flex-1">
        <LeftPanel />
        <Splitter side="left" />
        <main className="flex min-w-0 flex-1 flex-col border-r-2 border-[#ccc]">
          <DocTabs />
          <div className="shrink-0 font-['DejaVu_Sans_Mono',monospace]">
            <TopRuler />
          </div>
          <div className="flex min-h-0 flex-1 font-['DejaVu_Sans_Mono',monospace]">
            <SideRuler />
            <div className="min-w-0 flex-1 overflow-hidden">
              <Board />
            </div>
          </div>
        </main>
        <Splitter side="right" />
        <RightPanel />
      </div>
      <BottomPanel />
    </div>
  );
}
